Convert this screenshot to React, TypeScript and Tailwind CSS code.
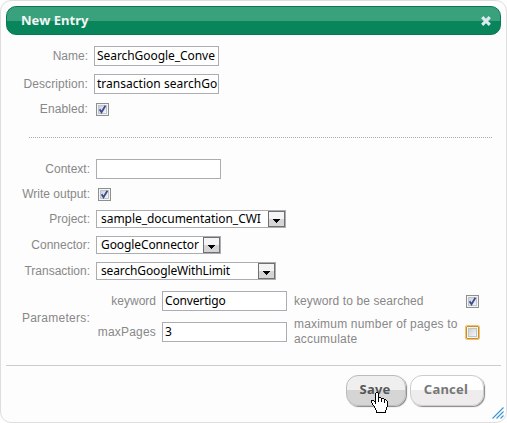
import type { ReactNode } from "react";

const sans = "font-['Liberation_Sans',Arial,sans-serif]";
const ui = "font-['Noto_Sans','Open_Sans',sans-serif]";

function Label({ children, className = "w-[88px]" }: { children: ReactNode; className?: string }) {
  return <label className={`${className} shrink-0 text-right whitespace-nowrap`}>{children}</label>;
}

function Field({ value, className = "tracking-[-0.06px]" }: { value: string; className?: string }) {
  return (
    <div className={`h-5 w-[125px] shrink-0 overflow-hidden border border-[#abadb3] bg-white pl-0.5 text-[12px] leading-[17px] whitespace-nowrap text-black ${ui}`}>
      <span className={className}>{value}</span>
    </div>
  );
}

function Checkbox({ checked = false }: { checked?: boolean }) {
  return (
    <span className={`flex size-[13px] shrink-0 border p-px ${checked ? "border-[#8e8f8f] bg-[#f4f4f4]" : "rounded-[1px] border-[#c98f2c] bg-[#f4f4f4] outline outline-[#f0c26a]"}`}>
      <span className="flex size-[9px] border border-[#bfc3ca] bg-linear-to-br from-[#ccd1d8] to-[#f6f6f6]">
        {checked && (
          <svg viewBox="0 0 9 9" className="-m-px size-[9px] shrink-0 overflow-visible" fill="none" stroke="#3d4d94" strokeWidth="1.8">
            <path d="M1.6 4.2 3.5 7.2 7.4 .8" />
          </svg>
        )}
      </span>
    </span>
  );
}

function Select({ value, width, tracking }: { value: string; width: string; tracking: string }) {
  return (
    <div className={`flex h-[18px] ${width} border border-[#abadb3] bg-white pl-1 text-[12px] leading-[16px] text-black ${ui}`}>
      <span className={`grow whitespace-nowrap ${tracking}`}>{value}</span>
      <span className="flex h-4 w-[17px] shrink-0 items-center justify-center border border-[#707070] bg-linear-to-b from-[#f4f4f4] from-50% to-[#d5d5d5] to-50% pt-[3px]">
        <svg width="7" height="4" viewBox="0 0 7 4" shapeRendering="crispEdges"><path d="M0 0h7v1H6v1H5v1H4v1H3V3H2V2H1V1H0z" /></svg>
      </span>
    </div>
  );
}

function HandCursor() {
  return (
    <svg className="absolute top-[391px] left-[370px]" width="17" height="22" viewBox="0 0 17 22" shapeRendering="crispEdges">
      <path d="M5 0h2v1h1v4h2v1h3v1h2v1h1v1h1v6h-1v3h-1v3H5v-3H4v-2H3v-2H2v-1H1v-2H0V8h3v1h1V1h1z" fill="#000" />
      <path d="M5 1h2v9h1V6h2v4h1V7h2v4h1V8h1v1h1v6h-1v3h-1v2H6v-2H5v-2H4v-2H3v-1H2v-2H1V9h2v1h1v2h1z" fill="#fff" />
    </svg>
  );
}

export default function App() {
  return (
    <div className="h-[423px] w-[507px] bg-white">
      <main className={`relative h-[423px] w-[507px] overflow-hidden rounded-[11px] border border-[#dedede] bg-[#fdfdfd] p-[5px] text-[12px] leading-[15px] text-[#888] ${sans}`}>
        <header className="flex h-[29px] w-[495px] items-center justify-between rounded-[10px] border border-[#087a50] bg-linear-to-b from-[#3aa17d] from-52% to-[#09855b] to-52% pr-[9px] pl-[14px]">
          <h1 className={`text-[13px] leading-[17px] font-bold tracking-[0.04px] text-[#f1f5f3] ${ui}`}>New Entry</h1>
          <svg width="10" height="10" viewBox="0 0 10 10" fill="none" stroke="#dce9ef" strokeWidth="3.1"><path d="m1.2 1.2 7.6 7.6m0-7.6L1.2 8.8" /></svg>
        </header>
        <section className="-ml-1.5 pt-[11px]">
          <div className="flex h-5 items-center gap-1.5"><Label>Name:</Label><Field value="SearchGoogle_Conve" /></div>
          <div className="mt-2 flex h-5 items-center gap-1.5"><Label className="w-[88px] tracking-[0.1px]">Description:</Label><Field value="transaction searchGo" className="tracking-[0.02px]" /></div>
          <div className="mt-[9px] flex h-[13px] items-center gap-2"><Label className="w-[88px] tracking-[0.1px]">Enabled:</Label><Checkbox checked /></div>
        </section>
        <div className="mt-[21px] mr-[8px] ml-[23px] h-px bg-[repeating-linear-gradient(90deg,#aaa_0_1px,transparent_1px_2px)]" />
        <section className="-ml-1.5 pt-[21px]">
          <div className="flex h-5 items-center gap-1.5"><Label className="w-[90px]">Context:</Label><Field value="" /></div>
          <div className="mt-[9px] flex h-[13px] items-center gap-2"><Label className="w-[90px]">Write output:</Label><Checkbox checked /></div>
          <div className="mt-[9px] flex flex-col gap-2">
            <div className="flex h-[18px] items-center gap-1.5"><Label className="w-[90px]">Project:</Label><Select value="sample_documentation_CWI" width="w-[190px]" tracking="tracking-[-0.04px]" /></div>
            <div className="flex h-[18px] items-center gap-1.5"><Label className="w-[90px]">Connector:</Label><Select value="GoogleConnector" width="w-[125px]" tracking="tracking-[-0.1px]" /></div>
            <div className="flex h-[18px] items-center gap-1.5"><Label className="w-[90px]">Transaction:</Label><Select value="searchGoogleWithLimit" width="w-[180px]" tracking="tracking-[-0.13px]" /></div>
          </div>
          <div className="mt-[11px] flex h-[53px] items-center">
            <Label className="w-[90px] pt-0.5 tracking-[0.25px]">Parameters:</Label>
            <div className="flex h-full flex-col gap-[11px]">
              <div className="flex h-5 items-center">
                <Label className="mr-1.5 w-[66px]">keyword</Label><Field value="Convertigo" className="tracking-[-0.15px]" />
                <span className="ml-[7px] w-[172px] tracking-[0.1px]">keyword to be searched</span><Checkbox checked />
              </div>
              <div className="flex h-5 items-center">
                <Label className="mr-1.5 w-[66px] tracking-[0.2px]">maxPages</Label><Field value="3" />
                <span className="ml-[7px] w-[172px] tracking-[0.19px]">maximum number of pages to accumulate</span><Checkbox />
              </div>
            </div>
          </div>
        </section>
        <footer className={`mt-[21px] flex h-[50px] w-[495px] justify-end gap-1 border-t border-[#ccc] pt-[9px] pr-[17px] text-[13px] font-bold ${ui}`}>
          <button className="h-[31px] w-[60px] rounded-[12px] border border-[#bbb] bg-linear-to-b from-[#efefef] from-50% to-[#d5d5d5] to-50% pr-0.5 pb-[3px] tracking-[0.2px] text-[#555] shadow-[1px_1px_1px_#888]">Save</button>
          <button className="h-[31px] w-[74px] rounded-[12px] border border-[#ccc] bg-linear-to-b from-white from-50% to-[#eeecec] to-50% pr-0.5 pb-[3px] tracking-[0.25px] text-[#777] shadow-[1px_1px_1px_#888]">Cancel</button>
        </footer>
        <svg className="absolute right-[2px] bottom-[3px]" width="12" height="12" viewBox="0 0 12 12" stroke="#3995d5" strokeWidth="1.1"><path d="M.5 11.5l11-11M4.5 11.5l7-7M8.5 11.5l3-3" /></svg>
        <HandCursor />
      </main>
    </div>
  );
}
